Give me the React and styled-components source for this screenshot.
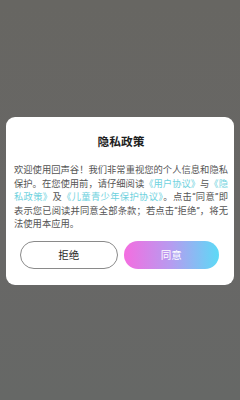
import React from "react";
import styled, { createGlobalStyle } from "styled-components";

const Global = createGlobalStyle`
  html, body { margin: 0; padding: 0; }
  body {
    width: 240px;
    height: 400px;
    overflow: hidden;
    background: #686764;
    font-family: Roboto, "Noto Sans CJK SC", sans-serif;
  }
`;

const Screen = styled.div`
  width: 240px;
  height: 400px;
  background: linear-gradient(180deg, #676662 0%, #686766 60%, #666866 100%);
  display: flex;
  flex-direction: column;
  align-items: center;
  padding-top: 117px;
  box-sizing: border-box;
`;

const Dialog = styled.div`
  width: 228px;
  background: #ffffff;
  border-radius: 9px;
  padding: 17px 6px 16px 8px;
  box-sizing: border-box;
  display: flex;
  flex-direction: column;
`;

const Title = styled.div`
  font-size: 11.7px;
  line-height: 16px;
  font-weight: 700;
  color: #1e1e1e;
  text-align: center;
  margin-bottom: 13px;
`;

const Body = styled.p`
  margin: 0;
  font-size: 9.3px;
  line-height: 13.5px;
  color: #555555;
  text-align: justify;
`;

const Link = styled.span`
  color: #6fd2de;
`;

const Buttons = styled.div`
  display: flex;
  gap: 6px;
  margin-top: 10px;
  padding: 0 9px 0 6px;
`;

const Button = styled.button`
  flex: 1;
  height: 28px;
  border-radius: 14px;
  font-family: Roboto, "Noto Sans CJK SC", sans-serif;
  font-size: 10.5px;
  padding: 0;
  cursor: pointer;
  border: ${(p) => (p.$primary ? "none" : "1px solid #8a8a8a")};
  color: ${(p) => (p.$primary ? "#ffffff" : "#2a2a2a")};
  background: ${(p) =>
    p.$primary
      ? "linear-gradient(90deg, #f46de0 0%, #b59cf0 50%, #5cdaf6 100%)"
      : "#ffffff"};
`;

export default function App() {
  return (
    <>
      <Global />
      <Screen>
        <Dialog>
          <Title>隐私政策</Title>
          <Body>
            欢迎使用回声谷！我们非常重视您的个人信息和隐私保护。在您使用前，请仔细阅读
            <Link>《用户协议》</Link>与<Link>《隐私政策》</Link>及
            <Link>《儿童青少年保护协议》</Link>。点击“同意”即表示您已阅读并同意全部条款；若点击“拒绝”，将无法使用本应用。
          </Body>
          <Buttons>
            <Button>拒绝</Button>
            <Button $primary>同意</Button>
          </Buttons>
        </Dialog>
      </Screen>
    </>
  );
}
